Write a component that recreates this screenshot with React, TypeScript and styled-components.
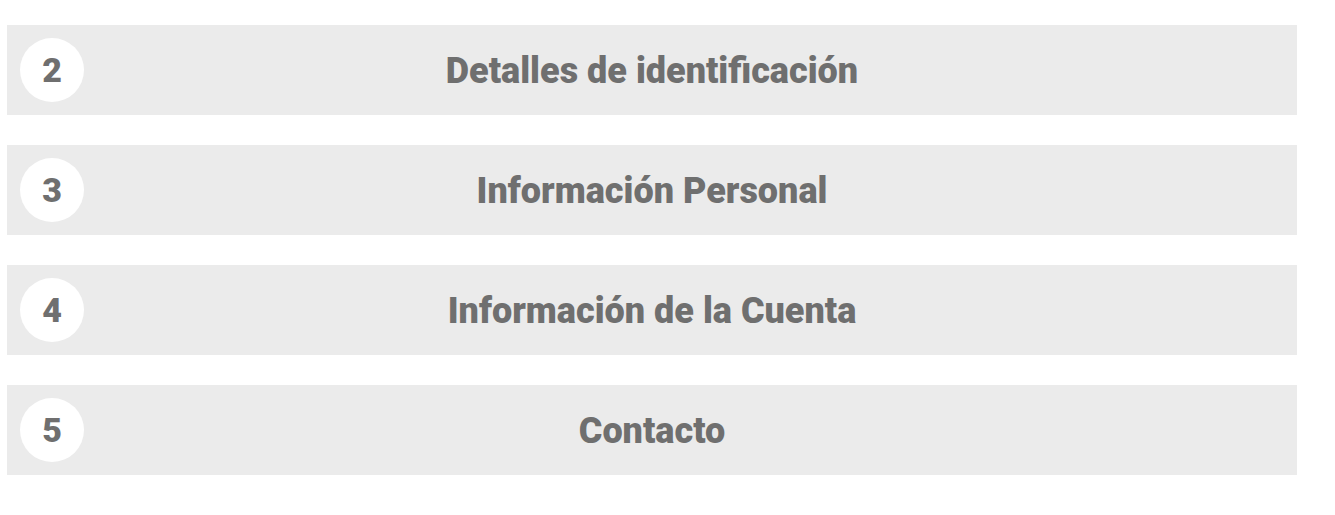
import styled, { createGlobalStyle } from 'styled-components';

const GlobalStyle = createGlobalStyle`
  body {
    margin: 0;
    background: #ffffff;
    font-family: Roboto, "Liberation Sans", Arial, sans-serif;
  }
`;

const steps = [
  { number: 2, title: 'Detalles de identificación' },
  { number: 3, title: 'Información Personal' },
  { number: 4, title: 'Información de la Cuenta' },
  { number: 5, title: 'Contacto' },
];

export default function App() {
  return (
    <>
      <GlobalStyle />
      <St.StepList>
        {steps.map((step) => (
          <St.StepBar key={step.number}>
            <St.StepNumber>{step.number}</St.StepNumber>
            <St.StepTitle>{step.title}</St.StepTitle>
          </St.StepBar>
        ))}
      </St.StepList>
    </>
  );
}

const St = {
  StepList: styled.div`
    display: flex;
    flex-direction: column;
    gap: 30px;

    padding: 25px 38px 0 7px;
  `,
  StepBar: styled.div`
    display: grid;
    grid-template-columns: 1fr auto 1fr;
    align-items: center;

    height: 90px;
    padding: 0 13px;
    box-sizing: border-box;

    background-color: #ebebeb;
  `,
  StepNumber: styled.div`
    display: flex;
    justify-content: center;
    align-items: center;

    width: 64px;
    height: 64px;

    border-radius: 50%;
    background-color: #ffffff;

    font-size: 34px;
    font-weight: 900;
    color: #6f6f6f;
  `,
  StepTitle: styled.div`
    padding-top: 2px;

    font-size: 36px;
    font-weight: 900;
    color: #6f6f6f;
    white-space: nowrap;
  `,
};
